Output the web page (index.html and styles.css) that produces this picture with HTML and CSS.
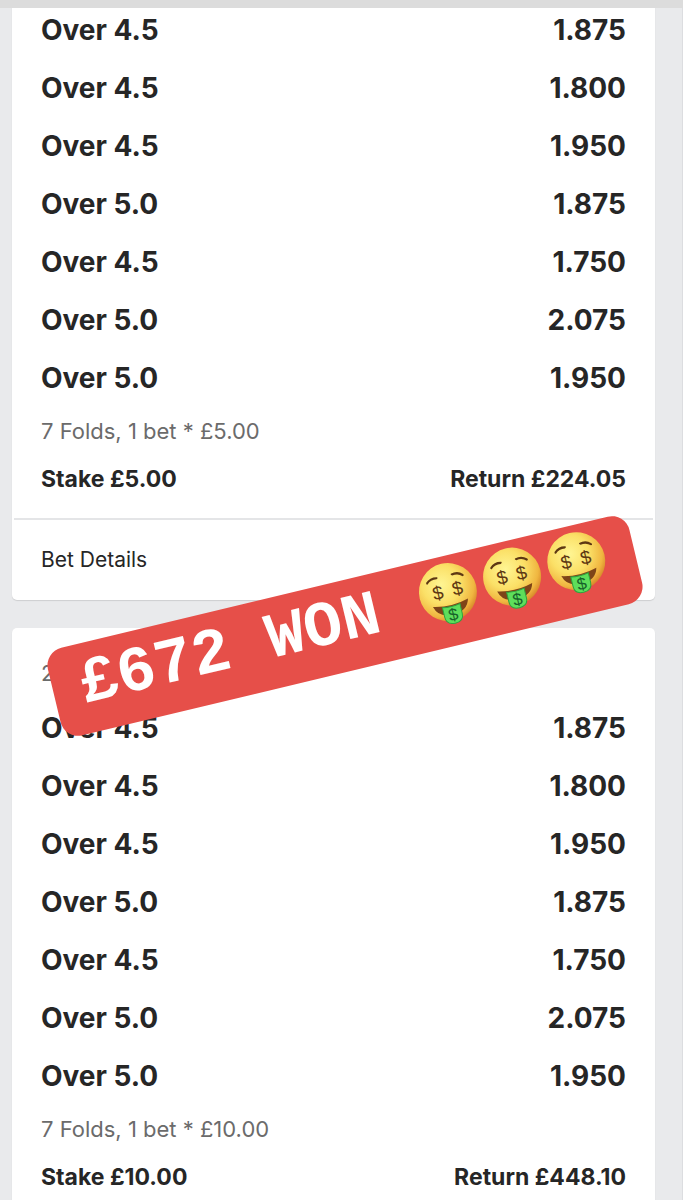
FILE: index.html
```html
<!DOCTYPE html>
<html lang="en">
<head>
    <meta charset="UTF-8">
    <meta name="viewport" content="width=device-width, initial-scale=1.0">
    <title>Bet History</title>
    <link rel="stylesheet" href="styles.css">
</head>
<body>
    <header class="top-bar"></header>

    <main class="bets">
        <section class="bet-card">
            <ul class="selections">
                <li><span>Over 4.5</span><span>1.875</span></li>
                <li><span>Over 4.5</span><span>1.800</span></li>
                <li><span>Over 4.5</span><span>1.950</span></li>
                <li><span>Over 5.0</span><span>1.875</span></li>
                <li><span>Over 4.5</span><span>1.750</span></li>
                <li><span>Over 5.0</span><span>2.075</span></li>
                <li><span>Over 5.0</span><span>1.950</span></li>
            </ul>
            <p class="folds">7 Folds, 1 bet * £5.00</p>
            <div class="totals">
                <span>Stake £5.00</span>
                <span>Return £224.05</span>
            </div>
            <button class="details-btn" type="button">Bet Details</button>
        </section>

        <section class="bet-card">
            <p class="bet-date">2</p>
            <ul class="selections">
                <li><span>Over 4.5</span><span>1.875</span></li>
                <li><span>Over 4.5</span><span>1.800</span></li>
                <li><span>Over 4.5</span><span>1.950</span></li>
                <li><span>Over 5.0</span><span>1.875</span></li>
                <li><span>Over 4.5</span><span>1.750</span></li>
                <li><span>Over 5.0</span><span>2.075</span></li>
                <li><span>Over 5.0</span><span>1.950</span></li>
            </ul>
            <p class="folds">7 Folds, 1 bet * £10.00</p>
            <div class="totals">
                <span>Stake £10.00</span>
                <span>Return £448.10</span>
            </div>
        </section>

        <div class="sticker">
            <span class="sticker-text">£672 WON</span>
            <span class="faces">
                <svg class="face" viewBox="0 0 60 64">
                    <defs>
                        <radialGradient id="skin" cx="0.42" cy="0.35" r="0.66">
                            <stop offset="0" stop-color="#fff593"/>
                            <stop offset="0.5" stop-color="#fbe067"/>
                            <stop offset="0.85" stop-color="#f0b640"/>
                            <stop offset="1" stop-color="#d98b2b"/>
                        </radialGradient>
                        <g id="money-face">
                            <circle cx="30" cy="30" r="29" fill="url(#skin)"/>
                            <path d="M11 16 Q16 11 23 13 Q24 14 22 15 Q16 14 12 18 Q10 18 11 16Z" fill="#5e3813"/>
                            <path d="M49 16 Q44 11 37 13 Q36 14 38 15 Q44 14 48 18 Q50 18 49 16Z" fill="#5e3813"/>
                            <text x="20" y="35">$</text>
                            <text x="40" y="35">$</text>
                            <path d="M12 41 Q30 46 48 41 Q45 53 30 53 Q15 53 12 41Z" fill="#7e4418"/>
                            <path d="M21 44 Q30 46 39 44 V54 Q39 62 30 62 Q21 62 21 54Z" fill="#5ede5b" stroke="#2fa23e"/>
                            <text class="tongue" x="30" y="59">$</text>
                        </g>
                    </defs>
                    <use href="#money-face"/>
                </svg>
                <svg class="face" viewBox="0 0 60 64"><use href="#money-face"/></svg>
                <svg class="face" viewBox="0 0 60 64"><use href="#money-face"/></svg>
            </span>
        </div>
    </main>
</body>
</html>
```
FILE: styles.css
```css
* {
    box-sizing: border-box;
}
body {
    margin: 0;
    background: #e9eaec;
    color: #262626;
    font-family: Inter, "Liberation Sans", sans-serif;
}
.top-bar {
    position: fixed;
    top: 0;
    left: 0;
    right: 0;
    height: 8px;
    background: #dcdcdc;
    z-index: 2;
}
.bets {
    position: relative;
    height: 100vh;
    overflow: hidden;
    padding: 0 27px 0 12px;
    border-right: 1px solid #dcdde0;
}
.bet-card {
    background: white;
    border-radius: 5px;
    box-shadow: 0 1px 1px rgba(0,0,0,0.12);
    margin-bottom: 28px;
    padding-top: 1px;
}
.bet-date {
    margin: 0;
    padding: 18px 29px 0;
    font-size: 22px;
    line-height: 52px;
    color: #6b6b6b;
}
.selections {
    list-style: none;
    margin: 0;
    padding: 0 29px;
    font-size: 28px;
    font-weight: 700;
    line-height: 58px;
}
.selections li {
    display: flex;
    justify-content: space-between;
}
.folds {
    margin: 0;
    padding: 0 29px;
    font-size: 22px;
    line-height: 48px;
    color: #6b6b6b;
}
.totals {
    display: flex;
    justify-content: space-between;
    margin: 0 2px;
    padding: 0 27px 15px;
    font-size: 23px;
    font-weight: 700;
    line-height: 48px;
}
.details-btn {
    display: block;
    width: calc(100% - 4px);
    margin: 0 2px;
    padding: 0 27px;
    background: none;
    border: none;
    border-top: 2px solid #e4e5e7;
    color: #262626;
    font-family: inherit;
    font-size: 21px;
    line-height: 80px;
    text-align: left;
    cursor: pointer;
}
.sticker {
    position: absolute;
    top: 581px;
    left: 46px;
    width: 598px;
    height: 90px;
    display: flex;
    align-items: center;
    gap: 42px;
    padding: 0 0 14px 28px;
    background: #e64f49;
    border-radius: 18px;
    color: white;
    transform: rotate(-13.5deg);
}
.sticker-text {
    padding-top: 8px;
    font-family: "Courier New", "Liberation Mono", monospace;
    font-size: 64px;
    font-weight: bold;
    line-height: 64px;
    white-space: nowrap;
}
.faces {
    display: flex;
    gap: 6px;
}
.face {
    width: 60px;
    height: 64px;
}
.face text {
    font-family: "Liberation Sans", sans-serif;
    font-size: 19px;
    text-anchor: middle;
    fill: #5e3813;
}
.face .tongue {
    font-size: 17px;
    fill: #17622a;
}
```
